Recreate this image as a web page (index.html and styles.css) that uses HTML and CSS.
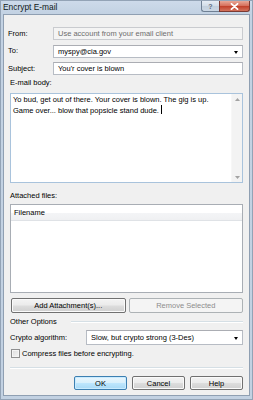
FILE: index.html
```html
<!DOCTYPE html>
<html>
<head>
<meta charset="utf-8">
<title>Encrypt E-mail</title>
<link rel="stylesheet" href="styles.css">
</head>
<body>
<div class="window">
  <div class="titlebar">
    <span class="title">Encrypt E-mail</span>
    <div class="caption-buttons">
      <div class="cap-btn cap-help">?</div>
      <div class="cap-btn cap-close">
        <svg width="9" height="7" viewBox="0 0 9 7"><path d="M1.5 0.8 L7.5 6.2 M7.5 0.8 L1.5 6.2" stroke="#ffffff" stroke-width="1.8" stroke-linecap="round"/></svg>
      </div>
    </div>
  </div>
  <div class="client">
    <div class="fields">
      <span class="label">From:</span>
      <div class="input disabled">Use account from your email client</div>
      <span class="label">To:</span>
      <div class="input combo">myspy@cia.gov<span class="arrow"></span></div>
      <span class="label">Subject:</span>
      <div class="input">You'r cover is blown</div>
    </div>
    <div class="section-label label-body">E-mail body:</div>
    <div class="textarea">
      <div class="text-content">Yo bud, get out of there. Your cover is blown. The gig is up.<br>Game over... blow that popsicle stand dude. <span class="caret"></span></div>
      <div class="vscroll">
        <svg width="5" height="3" viewBox="0 0 5 3"><path d="M0 3 L2.5 0 L5 3 Z" fill="#a3a3a3"/></svg>
        <svg width="5" height="3" viewBox="0 0 5 3"><path d="M0 0 L2.5 3 L5 0 Z" fill="#a3a3a3"/></svg>
      </div>
    </div>
    <div class="section-label label-attached">Attached files:</div>
    <div class="listbox">
      <div class="list-header">Filename</div>
    </div>
    <div class="attach-buttons">
      <button class="btn">Add Attachment(s)...</button>
      <button class="btn" disabled>Remove Selected</button>
    </div>
    <div class="group-title"><span>Other Options</span><span class="group-line"></span></div>
    <div class="crypto-row">
      <span class="label">Crypto algorithm:</span>
      <div class="input combo">Slow, but crypto strong (3-Des)<span class="arrow"></span></div>
    </div>
    <div class="check-row"><span class="checkbox"></span><span>Compress files before encrypting.</span></div>
    <div class="separator"></div>
    <div class="dialog-buttons">
      <button class="btn default">OK</button>
      <button class="btn">Cancel</button>
      <button class="btn">Help</button>
    </div>
  </div>
</div>
</body>
</html>
```
FILE: styles.css
```css
* { box-sizing: border-box; }
html, body { margin: 0; padding: 0; }
body {
  width: 253px;
  height: 400px;
  overflow: hidden;
  font-family: "Liberation Sans", Arial, sans-serif;
  font-size: 7.5px;
  color: #000;
}
.window {
  width: 253px;
  height: 400px;
  display: flex;
  flex-direction: column;
  background: linear-gradient(180deg, #cddaea 0px, #c3d2e3 12px, #c2d1e2 100%);
  border: 1px solid #93a3b6;
}
.titlebar {
  height: 12px;
  display: flex;
  align-items: flex-start;
  padding-left: 2px;
}
.title {
  font-size: 8.4px;
  line-height: 13px;
  color: #101820;
}
.caption-buttons {
  margin-left: auto;
  margin-right: 2px;
  display: flex;
}
.cap-btn {
  height: 11px;
  display: flex;
  align-items: center;
  justify-content: center;
  border: 1px solid #6f8094;
  border-top: none;
}
.cap-help {
  width: 18px;
  border-radius: 0 0 0 3px;
  border-right: none;
  background: linear-gradient(180deg, #e6edf5 0%, #d1dce8 50%, #c2cfdd 51%, #ccd8e5 100%);
  color: #5d6d80;
  font-weight: bold;
  font-size: 7px;
}
.cap-close {
  width: 31px;
  border-radius: 0 0 3px 0;
  border-color: #7b3a33;
  background: linear-gradient(180deg, #e8a898 0%, #d7735f 45%, #c2432d 55%, #d2725c 100%);
}
.client {
  flex: 1;
  margin: 1px 2px 3px 2px;
  background: #f0f0f0;
  border: 1px solid #8f9fb2;
  padding: 12px 6px 0 6px;
  display: flex;
  flex-direction: column;
}
.fields {
  display: grid;
  grid-template-columns: 45px 1fr;
  grid-auto-rows: 13px;
  row-gap: 4.5px;
  margin-left: -2px;
  align-items: center;
}
.label { line-height: 10px; }
.input {
  height: 13px;
  background: #ffffff;
  border: 1px solid #b7bcc4;
  border-top-color: #abadb3;
  padding: 0 4px;
  line-height: 11px;
  white-space: nowrap;
  overflow: hidden;
  display: flex;
  align-items: center;
}
.input.disabled {
  background: #f4f4f4;
  border-color: #c9cbcf;
  color: #6d6d6d;
}
.combo { position: relative; }
.arrow {
  position: absolute;
  right: 4px;
  top: 5px;
  width: 0;
  height: 0;
  border-left: 2.5px solid transparent;
  border-right: 2.5px solid transparent;
  border-top: 3px solid #000;
}
.section-label {
  height: 10px;
  line-height: 10px;
}
.label-body { margin-top: 3px; }
.textarea {
  margin-top: 5px;
  height: 90px;
  background: #ffffff;
  border: 1px solid #a9c3dc;
  display: flex;
}
.text-content {
  flex: 1;
  padding: 1px 2px;
  line-height: 10px;
}
.caret {
  display: inline-block;
  width: 1px;
  height: 9px;
  background: #000;
  vertical-align: -1px;
}
.vscroll {
  width: 11px;
  background: #f3f3f3;
  border-left: 1px solid #f7f7f7;
  display: flex;
  flex-direction: column;
  justify-content: space-between;
  align-items: center;
  padding: 4px 0 3px;
}
.label-attached { margin-top: 8px; }
.listbox {
  margin-top: 3px;
  height: 89px;
  background: #ffffff;
  border: 1px solid #a8adb4;
}
.list-header {
  height: 16px;
  padding-left: 3px;
  line-height: 15px;
  background: linear-gradient(180deg, #ffffff 0%, #ffffff 50%, #f4f5f7 51%, #eff0f2 100%);
  border-bottom: 1px solid #dfe2e6;
}
.btn {
  font-family: "Liberation Sans", Arial, sans-serif;
  font-size: 7.5px;
  color: #000;
  padding: 0;
  border: 1px solid #707070;
  border-radius: 2px;
  background: linear-gradient(180deg, #f3f3f3 0%, #ebebeb 48%, #dddddd 52%, #cfcfcf 100%);
  box-shadow: inset 0 0 0 1px #fafafa;
}
.btn:disabled {
  border-color: #adb2b5;
  background: #f4f4f4;
  color: #8d8d8d;
  box-shadow: none;
}
.btn.default {
  border-color: #3c7fb1;
  background: linear-gradient(180deg, #eaf6fd 0%, #d9f0fc 48%, #bee6fd 52%, #a7d9f5 100%);
  box-shadow: inset 0 0 0 1px #c9ebff;
}
.attach-buttons {
  margin-top: 5px;
  display: flex;
  gap: 3px;
  height: 15px;
  padding-left: 1px;
}
.attach-buttons .btn { flex: 1; }
.group-title {
  margin-top: 4px;
  height: 10px;
  display: flex;
  align-items: center;
  line-height: 10px;
}
.group-line {
  flex: 1;
  margin-left: 14px;
  height: 2px;
  border-top: 1px solid #d5dfe5;
  border-bottom: 1px solid #ffffff;
}
.crypto-row {
  margin-top: 3px;
  height: 15px;
  display: flex;
  align-items: center;
}
.crypto-row .label { width: 76px; }
.crypto-row .input { flex: 1; height: 15px; }
.crypto-row .arrow { top: 6px; }
.check-row {
  margin-top: 4px;
  height: 9px;
  display: flex;
  align-items: center;
  gap: 2px;
  padding-left: 1px;
}
.checkbox {
  width: 9px;
  height: 9px;
  border: 1px solid #8f8f8f;
  background: linear-gradient(135deg, #dcdcdc 0%, #f5f5f5 100%);
  box-shadow: inset 0 0 0 1px #f4f4f4;
}
.separator {
  margin-top: 9px;
  height: 2px;
  border-top: 1px solid #d5dfe5;
  border-bottom: 1px solid #ffffff;
}
.dialog-buttons {
  margin-top: 7px;
  height: 14px;
  display: flex;
  justify-content: flex-end;
  gap: 5px;
}
.dialog-buttons .btn { width: 53px; }
```
